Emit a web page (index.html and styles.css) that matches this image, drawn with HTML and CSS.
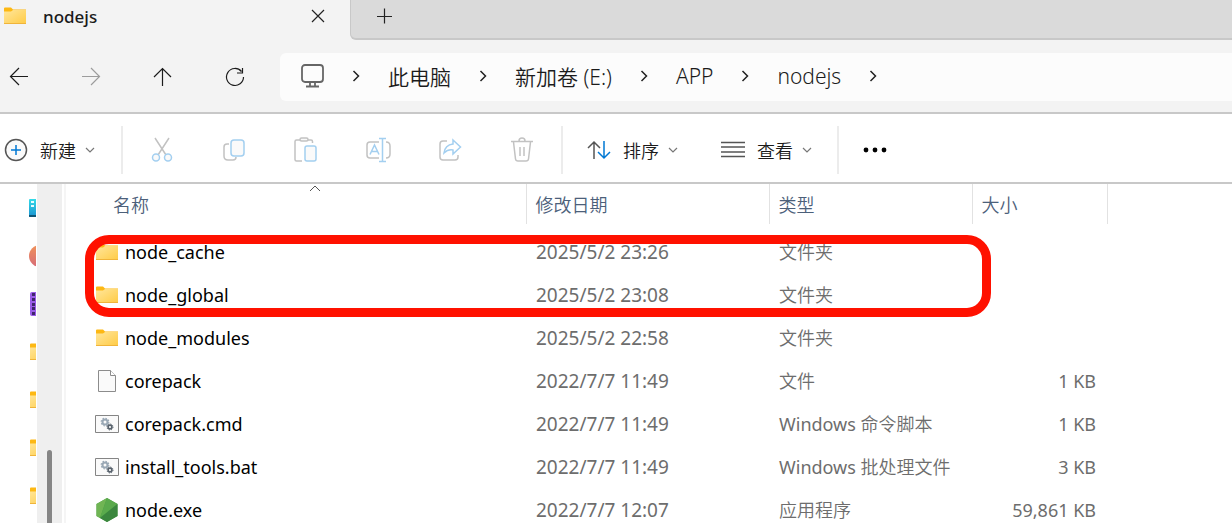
FILE: index.html
```html
<!doctype html>
<html lang="zh-CN">
  <head>
    <meta charset="UTF-8" />
    <meta name="viewport" content="width=device-width, initial-scale=1.0" />
    <title>nodejs</title>
    <link rel="stylesheet" href="styles.css">
  </head>
  <body>
    <!-- Shared icons -->
    <svg class="defs" width="0" height="0" aria-hidden="true">
      <defs>
        <linearGradient id="folder-fill" x1="0" y1="0" x2="1" y2="1">
          <stop offset="0" stop-color="#ffe69b" />
          <stop offset="1" stop-color="#ffcb45" />
        </linearGradient>
        <linearGradient id="server-fill" x1="0" y1="0" x2="0" y2="1">
          <stop offset="0" stop-color="#35dbe8" />
          <stop offset="1" stop-color="#1a91cf" />
        </linearGradient>
        <linearGradient id="music-fill" x1="0" y1="0" x2="0" y2="1">
          <stop offset="0" stop-color="#f0925a" />
          <stop offset="1" stop-color="#d66c78" />
        </linearGradient>
      </defs>
      <symbol id="folder" viewBox="0 0 24 18">
        <path d="M1 1.5Q1 .5 2 .5h6l2 2h13v4H1z" fill="#fdb813" />
        <path d="M1 4.5h7l2-1.500h13V17H1z" fill="url(#folder-fill)" />
        <path d="M1 16.5h22" stroke="#f0b43a" />
      </symbol>
      <symbol id="chevron" viewBox="0 0 8 12">
        <path d="M1.5 1l5 5-5 5" fill="none" stroke="#222" stroke-width="1.5" />
      </symbol>
      <symbol id="caret" viewBox="0 0 10 6">
        <path d="M1 1l4 4 4-4" fill="none" stroke="#777" stroke-width="1.2" />
      </symbol>
      <symbol id="script" viewBox="0 0 24 18">
        <path d="M.5.5h23v17H.5z" fill="#fafafa" stroke="#858585" />
        <circle cx="10" cy="7" r="2.5" fill="none" stroke="#9aa8b5" stroke-width="2" />
        <circle cx="10" cy="7" r="3.8" fill="none" stroke="#9aa8b5" stroke-width="1.2" stroke-dasharray="1.5 1.48" />
        <circle cx="15" cy="12" r="1.9" fill="none" stroke="#59636d" stroke-width="1.6" />
        <circle cx="15" cy="12" r="3" fill="none" stroke="#59636d" stroke-dasharray="1.2 1.15" />
      </symbol>
    </svg>

    <header class="tabs">
      <div class="tab">
        <svg class="folder" width="24" height="18"><use href="#folder" /></svg>
        <span class="tab-title">nodejs</span>
        <button class="tab-close" aria-label="关闭标签页">
          <svg width="14" height="14" viewBox="0 0 14 14"><path d="M1 1l12 12M13 1L1 13" /></svg>
        </button>
      </div>
      <div class="tab-strip">
        <button aria-label="新建标签页">
          <svg width="16" height="16" viewBox="0 0 16 16"><path d="M7.5 .5v15M0 8.5h15" /></svg>
        </button>
      </div>
    </header>

    <nav class="nav">
      <button class="icon-button" aria-label="后退">
        <svg width="20" height="20" viewBox="0 0 20 20"><path d="M19 9.5H1.5M10 1L1.5 9.5 10 18" /></svg>
      </button>
      <button class="icon-button muted" aria-label="前进">
        <svg width="20" height="20" viewBox="0 0 20 20"><path d="M1 9.5h17.5M10 1l8.5 8.5L10 18" /></svg>
      </button>
      <button class="icon-button" aria-label="向上">
        <svg width="20" height="20" viewBox="0 0 20 20"><path d="M9.5 19V1.5M1 10l8.5-8.5L18 10" /></svg>
      </button>
      <button class="icon-button" aria-label="刷新">
        <svg width="20" height="20" viewBox="0 0 20 20"><path d="M16.5 4.5A8.5 8.5 0 1 0 18.5 10M17.5 1v5H12" /></svg>
      </button>
      <div class="address">
        <svg class="pc" width="24" height="24" viewBox="0 0 24 24">
          <rect x="2" y="1" width="21" height="17" rx="3" />
          <path d="M10 18v4M15 18v4M6 22.5h13" />
        </svg>
        <svg class="chevron" width="8" height="12"><use href="#chevron" /></svg>
        <a href="#">此电脑</a>
        <svg class="chevron" width="8" height="12"><use href="#chevron" /></svg>
        <a href="#">新加卷 (E:)</a>
        <svg class="chevron" width="8" height="12"><use href="#chevron" /></svg>
        <a href="#">APP</a>
        <svg class="chevron" width="8" height="12"><use href="#chevron" /></svg>
        <a href="#">nodejs</a>
        <svg class="chevron" width="8" height="12"><use href="#chevron" /></svg>
      </div>
    </nav>

    <div class="toolbar">
      <button class="menu-button new">
        <svg width="24" height="24" viewBox="0 0 24 24">
          <circle cx="12" cy="12" r="10.5" fill="#fafafa" stroke="#555" stroke-width="1.5" />
          <path d="M12 7v10M7 12h10" stroke="#0078d4" stroke-width="1.5" />
        </svg>
        <span>新建</span>
        <svg class="caret" width="10" height="6"><use href="#caret" /></svg>
      </button>
      <div class="tools">
        <button class="icon-button" aria-label="剪切">
          <svg width="24" height="26" viewBox="0 0 24 26">
            <path class="gray" d="M5 1l11 17M19 1L8 18" />
            <circle class="blue" cx="6" cy="20.5" r="3.5" />
            <circle class="blue" cx="18" cy="20.5" r="3.5" />
          </svg>
        </button>
        <button class="icon-button" aria-label="复制">
          <svg width="24" height="24" viewBox="0 0 24 24">
            <path class="gray" d="M7 6H5Q2 6 2 9v9q0 4 4 4h5q3 0 3-3" />
            <rect class="blue" x="9" y="2" width="13" height="16" rx="3" />
          </svg>
        </button>
        <button class="icon-button" aria-label="粘贴">
          <svg width="24" height="26" viewBox="0 0 24 26">
            <path class="gray" d="M6 3H2.5Q1 3 1 4.5v18Q1 24 2.5 24H8M14 3h3q1.5 0 1.5 1.5V6" />
            <rect class="gray" x="6" y="1" width="8" height="3" rx="1.5" />
            <rect class="blue" x="11" y="9" width="11" height="15" rx="2" />
          </svg>
        </button>
        <button class="icon-button" aria-label="重命名">
          <svg width="26" height="26" viewBox="0 0 26 26">
            <path class="gray" d="M14 5H5Q2 5 2 8v10q0 3 3 3h9M21 5q4 0 4 4v8q0 4-4 4" />
            <path class="blue" d="M5 17.5L9.5 8l4.500 9.500M6.500 14.500h6M17.500 2v22M14 1.500h7M14 24.500h7" />
          </svg>
        </button>
        <button class="icon-button" aria-label="共享">
          <svg width="24" height="24" viewBox="0 0 24 24">
            <path class="gray" d="M9 3H5Q2 3 2 6v13q0 3 3 3h12q3 0 3-3v-2" />
            <path class="blue" d="M15 2l7.5 7-7.5 7v-4q-5-1-9 3Q7 7 15 6z" />
          </svg>
        </button>
        <button class="icon-button" aria-label="删除">
          <svg width="24" height="26" viewBox="0 0 24 26">
            <path class="gray" d="M1 4.5h22M9 4q0-3 3-3t3 3M3.5 5l2 17q.3 2 2.5 2h8q2.2 0 2.5-2l2-17M10 10v9M14 10v9" />
          </svg>
        </button>
      </div>
      <button class="menu-button sort">
        <svg width="24" height="20" viewBox="0 0 24 20">
          <path d="M7 19V2M1 8l6-6 6 6" stroke="#555" stroke-width="1.5" fill="none" />
          <path d="M17 1v17M11 12l6 6 6-6" stroke="#0078d4" stroke-width="1.5" fill="none" />
        </svg>
        <span>排序</span>
        <svg class="caret" width="10" height="6"><use href="#caret" /></svg>
      </button>
      <button class="menu-button view">
        <svg width="24" height="17" viewBox="0 0 24 17">
          <path d="M0 1.5h24M0 6h24M0 11h24M0 15.5h24" stroke="#555" stroke-width="1.5" />
        </svg>
        <span>查看</span>
        <svg class="caret" width="10" height="6"><use href="#caret" /></svg>
      </button>
      <button class="more" aria-label="查看更多">
        <svg width="24" height="6" viewBox="0 0 24 6">
          <circle cx="3" cy="3" r="2.4" /><circle cx="12" cy="3" r="2.4" /><circle cx="21" cy="3" r="2.4" />
        </svg>
      </button>
    </div>

    <main class="content">
      <aside class="sidebar">
        <svg width="7" height="24" viewBox="0 0 7 24">
          <path d="M0 4q0-1 1-1h6v18H0z" fill="url(#server-fill)" />
          <path d="M0 19h7v2H1q-1 0-1-1z" fill="#0c5576" />
          <path d="M2 5h3v2H2zM2 9h3v2H2z" fill="#e6fbff" />
        </svg>
        <svg width="7" height="24" viewBox="0 0 7 24"><circle cx="11" cy="12" r="11" fill="url(#music-fill)" /></svg>
        <svg width="7" height="24" viewBox="0 0 7 24">
          <path d="M1 2q0-2 2-2h4v24H3q-2 0-2-2z" fill="#9a5de8" />
          <path d="M3 1h3v3H3zM3 6h3v3H3zM3 11h3v3H3zM3 15h3v3H3zM3 20h3v3H3z" fill="#40256c" />
        </svg>
        <svg width="7" height="18" viewBox="0 0 7 18"><use href="#folder" width="24" height="18" /></svg>
        <svg width="7" height="18" viewBox="0 0 7 18"><use href="#folder" width="24" height="18" /></svg>
        <svg width="7" height="18" viewBox="0 0 7 18"><use href="#folder" width="24" height="18" /></svg>
        <svg width="7" height="18" viewBox="0 0 7 18"><use href="#folder" width="24" height="18" /></svg>
      </aside>
      <div class="scrollbar"><div class="thumb"></div></div>

      <section class="files">
        <table>
          <colgroup>
            <col class="col-name"><col class="col-date"><col class="col-type"><col class="col-size"><col>
          </colgroup>
          <thead>
            <tr>
              <th class="name">
                <button>名称
                  <svg class="sorted" width="12" height="7" viewBox="0 0 12 7"><path d="M1 6l5-5 5 5" /></svg>
                </button>
              </th>
              <th><button>修改日期</button></th>
              <th><button>类型</button></th>
              <th><button>大小</button></th>
              <td></td>
            </tr>
          </thead>
          <tbody>
            <tr>
              <td class="name"><div><svg width="24" height="18"><use href="#folder" /></svg>node_cache</div></td>
              <td class="date">2025/5/2 23:26</td>
              <td>文件夹</td>
              <td class="size"></td>
              <td></td>
            </tr>
            <tr>
              <td class="name"><div><svg width="24" height="18"><use href="#folder" /></svg>node_global</div></td>
              <td class="date">2025/5/2 23:08</td>
              <td>文件夹</td>
              <td class="size"></td>
              <td></td>
            </tr>
            <tr>
              <td class="name"><div><svg width="24" height="18"><use href="#folder" /></svg>node_modules</div></td>
              <td class="date">2025/5/2 22:58</td>
              <td>文件夹</td>
              <td class="size"></td>
              <td></td>
            </tr>
            <tr>
              <td class="name">
                <div>
                  <svg width="24" height="24" viewBox="0 0 24 24">
                    <path d="M3.5 1.5h12l5 5v16h-17z" fill="#fafafa" stroke="#8c8c8c" />
                    <path d="M15.5 1.5v5h5" fill="#fff" stroke="#8c8c8c" />
                  </svg>corepack
                </div>
              </td>
              <td class="date">2022/7/7 11:49</td>
              <td>文件</td>
              <td class="size">1 KB</td>
              <td></td>
            </tr>
            <tr>
              <td class="name"><div><svg width="24" height="18"><use href="#script" /></svg>corepack.cmd</div></td>
              <td class="date">2022/7/7 11:49</td>
              <td>Windows 命令脚本</td>
              <td class="size">1 KB</td>
              <td></td>
            </tr>
            <tr>
              <td class="name"><div><svg width="24" height="18"><use href="#script" /></svg>install_tools.bat</div></td>
              <td class="date">2022/7/7 11:49</td>
              <td>Windows 批处理文件</td>
              <td class="size">3 KB</td>
              <td></td>
            </tr>
            <tr>
              <td class="name">
                <div>
                  <svg width="24" height="24" viewBox="0 0 24 24">
                    <path d="M12 0l10.5 6v12L12 24 1.5 18V6z" fill="#479a45" />
                    <path d="M12 0L1.5 6v12L5 20z" fill="#70b554" />
                    <path d="M12 0l10.5 6L5 20z" fill="#5aaa4c" />
                    <path d="M22.5 6v12L12 24 5 20z" fill="#3b873e" />
                  </svg>node.exe
                </div>
              </td>
              <td class="date">2022/7/7 12:07</td>
              <td>应用程序</td>
              <td class="size">59,861 KB</td>
              <td></td>
            </tr>
          </tbody>
        </table>
        <div class="highlight"></div>
      </section>
    </main>
  </body>
</html>
```
FILE: styles.css
```css
* {
  box-sizing: border-box;
}

body {
  margin: 0;
  height: 100vh;
  display: flex;
  flex-direction: column;
  overflow: hidden;
  background: #fff;
  color: #1b1b1b;
  font-family: "Noto Sans", "Noto Sans CJK SC DemiLight", "Noto Sans CJK SC", sans-serif;
  font-size: 18px;
  font-weight: 350;
}

svg {
  display: block;
  flex: none;
}

button {
  border: none;
  padding: 0;
  background: none;
  color: inherit;
  font: inherit;
}

a {
  color: inherit;
  text-decoration: none;
}

.defs {
  position: absolute;
}

/* Tabs */
.tabs {
  display: flex;
  height: 40px;
  background: #f3f3f3;
}

.tab {
  display: flex;
  align-items: center;
  width: 350px;
  padding: 0 25px 8px 3px;
}

.tab-title {
  flex: 1;
  margin-left: 16px;
  font-size: 17px;
  font-weight: 500;
}

.tab-close path,
.tab-strip path {
  stroke: #222;
  stroke-width: 1.2;
}

.tab-strip {
  display: flex;
  flex: 1;
  align-items: center;
  padding: 0 26px 6px;
  background: #dadada;
  border-left: 1px solid #c8c8c8;
  border-bottom: 2px solid #c8c8c8;
  border-bottom-left-radius: 6px;
}

/* Navigation */
.nav {
  display: flex;
  align-items: center;
  gap: 34px;
  height: 74px;
  padding-top: 2px;
  background: #f3f3f3;
  border-bottom: 2px solid #c8c8c8;
}

.icon-button {
  display: flex;
  flex: none;
  align-items: center;
  justify-content: center;
  width: 38px;
  height: 38px;
}

.nav .icon-button path {
  fill: none;
  stroke: #1b1b1b;
  stroke-width: 1.2;
}

.nav .muted path {
  stroke: #9c9c9c;
}

.address {
  display: flex;
  flex: 1;
  align-items: center;
  gap: 28px;
  height: 48px;
  margin-left: -8px;
  padding: 0 0 2px 20px;
  background: #fcfcfc;
  border-radius: 6px 0 0 6px;
  font-size: 21px;
}

.pc {
  fill: none;
  stroke: #666;
  stroke-width: 1.8;
}

/* Toolbar */
.toolbar {
  display: flex;
  align-items: center;
  height: 70px;
  padding-top: 3px;
  border-bottom: 2px solid #c8c8c8;
}

.menu-button {
  display: flex;
  align-items: center;
  gap: 12px;
}

.menu-button .caret {
  margin-left: -3px;
}

.new {
  padding: 0 26px 0 4px;
}

.tools {
  display: flex;
  align-items: center;
  gap: 34px;
  height: 48px;
  padding: 0 20px;
  border: solid #ececec;
  border-width: 0 2px;
}

.gray,
.blue {
  fill: #fafafa;
  stroke: #c2c2c2;
  stroke-width: 1.5;
}

path.gray,
path.blue {
  fill: none;
}

.blue {
  stroke: #a3cff0;
}

.sort {
  padding-left: 24px;
}

.view {
  padding-left: 43px;
}

.more {
  display: flex;
  align-items: center;
  height: 48px;
  margin-left: 25px;
  padding-left: 24px;
  border-left: 2px solid #ececec;
}

/* Content */
.content {
  display: flex;
  flex: 1;
  min-height: 0;
}

.sidebar {
  display: grid;
  grid-auto-rows: 48px;
  align-items: center;
  justify-content: end;
  width: 37px;
  padding-right: 1px;
}

.scrollbar {
  display: flex;
  justify-content: center;
  width: 25px;
  background: #efefef;
}

.thumb {
  width: 5px;
  margin-top: 266px;
  background: #858585;
  border-radius: 3px 3px 0 0;
}

.files {
  position: relative;
  flex: 1;
  margin-left: 2px;
  border-left: 2px solid #f5f5f5;
}

table {
  width: 100%;
  table-layout: fixed;
  border-collapse: collapse;
}

.col-name {
  width: 460px;
}

.col-date {
  width: 243px;
}

.col-type {
  width: 203px;
}

.col-size {
  width: 135px;
}

th {
  height: 40px;
  padding: 0;
  border-right: 1px solid #e2e2e2;
  color: #4c607a;
  font-weight: inherit;
}

th button {
  display: block;
  position: relative;
  width: 100%;
  height: 40px;
  padding-left: 9px;
  text-align: left;
}

th.name {
  padding-left: 38px;
}

.sorted {
  position: absolute;
  top: 1px;
  left: calc(50% - 6px);
  fill: none;
  stroke: #555;
}

tbody::before {
  content: "";
  display: block;
  height: 6px;
}

tbody td {
  height: 43px;
  padding: 0 0 2px 10px;
  color: #6d6d6d;
  font-weight: 400;
  white-space: nowrap;
}

tbody .name {
  padding: 0 0 0 29px;
  color: #000;
}

.name div {
  display: flex;
  align-items: center;
  gap: 6px;
}

tbody .date,
tbody .size {
  padding-bottom: 0;
}

tbody .date {
  font-size: 19px;
}

tbody .size {
  padding-right: 11px;
  text-align: right;
}

/* Marker around the two npm folders */
.highlight {
  position: absolute;
  top: 51px;
  left: 19px;
  width: 906px;
  height: 82px;
  border: 9px solid #ff1100;
  border-radius: 24px;
}
```
